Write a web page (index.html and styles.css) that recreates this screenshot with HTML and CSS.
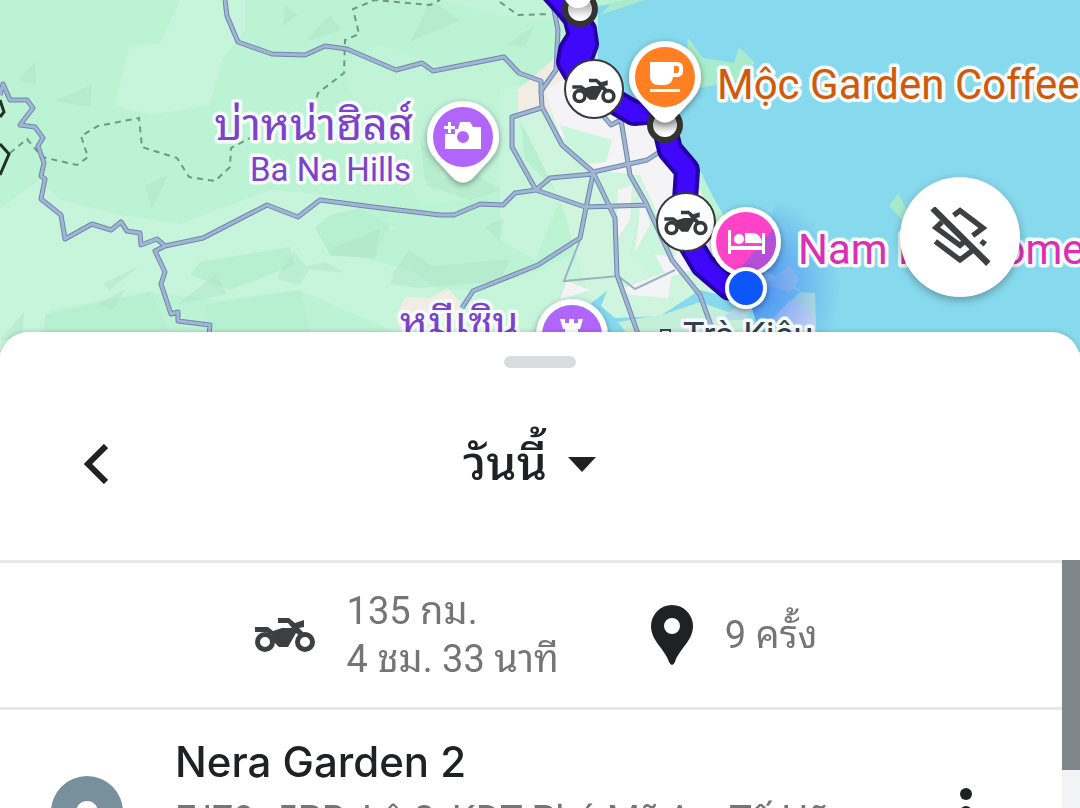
FILE: index.html
```html
<!DOCTYPE html>
<html lang="th">
<head>
    <meta charset="UTF-8">
    <meta name="viewport" content="width=device-width, initial-scale=1.0">
    <title>ไทม์ไลน์</title>
    <link rel="stylesheet" href="styles.css">
</head>
<body>
    <svg class="defs" width="0" height="0" aria-hidden="true">
        <symbol id="moto" viewBox="0 0 60 36">
            <circle cx="10" cy="25" r="7.5" fill="none" stroke="currentColor" stroke-width="5"/>
            <circle cx="50" cy="25" r="7.5" fill="none" stroke="currentColor" stroke-width="5"/>
            <path fill="currentColor" d="M0 10H13L18 14L27 11H37L33 6H23V1H34L40 6L49 3V10L44 11L51 18L46 20L41 16L33 30H24L19 25L17 18L11 15H0Z"/>
        </symbol>
        <symbol id="pin" viewBox="0 0 80 90">
            <path fill="#fff" d="M40 4A36 36 0 0 0 4 40C4 54 11 60 19 69L31 82Q40 89 49 82L61 69C69 60 76 54 76 40A36 36 0 0 0 40 4Z"/>
            <circle cx="40" cy="40" r="30" fill="currentColor"/>
        </symbol>
    </svg>

    <main class="map">
        <svg class="map-canvas" viewBox="0 0 1080 352" preserveAspectRatio="xMidYMin slice">
            <defs>
                <radialGradient id="beam" gradientUnits="userSpaceOnUse" cx="746" cy="288" r="95">
                    <stop offset="0" stop-color="#2b6cf6" stop-opacity=".75"/>
                    <stop offset="1" stop-color="#2b6cf6" stop-opacity="0"/>
                </radialGradient>
                <linearGradient id="stop-shade" x1="0" y1="0" x2="0" y2="1">
                    <stop offset="0.4" stop-color="#bbb"/>
                    <stop offset="0.8" stop-color="#fff"/>
                </linearGradient>
                <filter id="shadow" x="-30%" y="-30%" width="160%" height="160%">
                    <feDropShadow dx="0" dy="2" stdDeviation="3" flood-opacity=".4"/>
                </filter>
                <path id="roads" d="M0 95L3 84L10 100H27L33 108L20 125L35 127L43 138L38 146L44 163L41 176L45 179L41 199L61 215L65 239L92 224L111 230L121 222L127 231L140 233L141 245L157 239L165 246L155 251L165 272L161 284L171 314L178 312V321L210 325L208 345M165 246L203 238L267 205L298 217L320 200L373 207L440 215H454L480 204L503 205L515 193L536 190L550 178L593 174M536 190L585 207L648 205M225 0L227 16L238 42L272 54L305 55L325 46L347 49L396 70L422 63L433 71L504 57L519 73L541 81V93M552 0L558 30L556 70L541 91L542 107L562 145L593 172L615 218L617 275L642 345M541 108L512 117V147L536 190M593 174L586 208L580 238L538 265L473 291L462 308M593 172L647 160L675 142M600 112L611 125L621 120L630 175L646 203L672 260L700 295L718 345"/>
                <path id="route" d="M548 -14L566 6L577 20M576 20L580 36L571 50L569 62L576 74L592 92M584 30L586 44L580 60M594 90L612 100L634 113L655 111M664 125L670 150L687 170L685 200V235L703 265L730 288"/>
            </defs>

            <!-- land -->
            <rect width="1080" height="352" fill="#bcf3d4"/>
            <g fill="#c7f5dc">
                <path d="M180 0H245V30L222 60L210 105L150 115L115 105L130 45L160 44Z"/>
                <path d="M0 208L40 180L60 200L120 215L180 224L230 205L270 190L330 195L400 230L330 215L315 230L330 250L410 270L440 290L480 290L540 270L600 240V352H440L300 290L220 300L150 292L50 310L30 352H0Z"/>
                <path d="M345 60L380 45L440 65L500 62L520 80L515 160L495 190L470 200L420 205L395 150L360 120L350 90Z" opacity=".4"/>
                <path d="M500 90L540 80L560 200L535 260L500 240Z"/>
                <path d="M440 0H555V20L500 15Z" opacity=".6"/>
            </g>
            <g fill="#b7f0d0">
                <path d="M315 228L330 215L360 208L390 225L375 258L330 255ZM200 262L290 247L295 265L230 290L190 275ZM45 315L150 292L170 330L150 352H45Z"/>
                <path d="M520 115L555 120L580 170L555 190L525 160ZM205 305L300 290L315 352H215Z"/>
            </g>
            <g fill="#abe3c5" opacity=".4">
                <path d="M35 62L36 85L18 80ZM54 101L92 85L90 107ZM330 15L342 30L304 42ZM285 5L298 15L283 26Z"/>
                <path d="M145 185L168 175L152 209ZM103 284L140 265L110 290ZM278 275L294 251L309 270L300 284L278 280ZM178 304L215 275L227 294ZM0 340L24 312L22 340Z"/>
                <path d="M430 0L460 20L410 42L418 28ZM507 44L535 25L525 47ZM425 185L470 170L500 190L470 200ZM328 250L380 229L375 258L330 256ZM393 273L409 250L432 266L510 259L500 281L420 288L390 284Z"/>
                <path d="M485 226L504 218L500 242ZM300 268L325 262L345 273ZM97 304L125 290L112 310ZM420 140L450 190L425 180Z"/>
            </g>
            <!-- city -->
            <path d="M518 90L555 58L600 85L660 130L720 250L740 352H600L590 300L560 200L520 120Z" fill="#d0f5df"/>
            <path d="M518 90L555 58L590 95L620 130L580 128L540 108L518 118Z" fill="#f2ede4"/>
            <path d="M545 90L570 75L650 125L700 190L730 265L680 265L640 175L595 170L560 135Z" fill="#f4f4f6"/>
            <path d="M560 125L612 140L606 162L580 165L590 175L575 165ZM636 215L655 225L690 275L660 280L630 255Z" fill="#c9f6dc"/>
            <path d="M618 190L632 185L630 220L616 240ZM642 195L650 225L635 252ZM655 255L680 256L690 270L668 278ZM560 300L567 281L590 290ZM618 290L672 270L668 298L632 295Z" fill="#f4f4f6"/>
            <path d="M397 315L405 297L430 298L448 288L460 302L458 320L400 330Z" fill="#f2ede4"/>
            <!-- sea -->
            <path d="M598 6L640 0H1080V352H817L800 290L760 268L735 235L712 195L695 160L665 130L625 95L598 60Z" fill="#87d9ed"/>
            <path d="M598 6L625 0H618ZM688 38L703 58L734 63L739 47L755 63L738 80L700 88L685 70ZM615 0H645L600 15Z" fill="#a9ebcd"/>
            <path d="M889 206L898 194L906 208L904 222Z" fill="#a6ebc8"/>
            <path d="M590 304L607 291L601 306L615 318L660 316L700 290L740 300L780 282L820 300V352H600L595 322H560Z" fill="#87d9ed"/>
            <path d="M618 322L665 314L700 302L750 320L770 352H640ZM770 322L800 292L815 293L817 352H770Z" fill="#c4efd9"/>
            <path d="M745 300L790 265L799 280L790 292L770 286L745 320L720 320Z" fill="#b4dbe8"/>
            <path d="M770 322L790 300L812 310L820 352H760Z" fill="#d8dcf6" opacity=".8"/>

            <!-- trails -->
            <g class="trail">
                <path d="M10 153L27 139L42 157L77 165L88 157L81 136L98 126L139 118L142 147L177 158L189 177L215 181L230 167L231 148L250 138"/>
                <path d="M314 108L318 93L344 73L345 40L359 34L353 9L375 0L430 5L440 0"/>
                <path d="M500 2L518 15L550 14"/>
            </g>
            <path d="M0 100L4 112L0 117M0 144L9 154L0 175" fill="none" stroke="#223029" stroke-width="3"/>

            <!-- roads -->
            <path d="M580 240L564 281L618 276L635 289L675 270" fill="none" stroke="#9ab3c4" stroke-width="2"/>
            <use href="#roads" class="road-casing"/>
            <use href="#roads" class="road"/>

            <!-- travelled route -->
            <use href="#route" class="route-casing"/>
            <use href="#route" class="route"/>
            <path d="M746 288L775 205L805 195L850 240V352H765Z" fill="url(#beam)"/>

            <g class="stop">
                <circle cx="580" cy="9" r="15"/>
                <circle cx="665" cy="125" r="15"/>
            </g>
            <circle cx="578" cy="-6" r="14" fill="#fff"/>
            <circle cx="493" cy="-6" r="6" fill="#333"/>

            <g class="ride">
                <circle cx="594" cy="89" r="29"/>
                <use href="#moto" x="572" y="78" width="44" height="26"/>
                <circle cx="686" cy="222" r="29"/>
                <use href="#moto" x="664" y="210" width="44" height="26"/>
            </g>

            <!-- labels -->
            <g class="label">
                <text x="413" y="140" font-size="44" text-anchor="end" fill="#7c42c9">บ่าหน่าฮิลส์</text>
                <text x="411" y="181" font-size="33" text-anchor="end" fill="#7c42c9">Ba Na Hills</text>
                <text x="400" y="337" font-size="42" fill="#7c42c9">หมีเซิน</text>
                <text x="717" y="99" font-size="42" fill="#cf5a0c">Mộc Garden Coffee</text>
                <text x="798" y="264" font-size="42" fill="#d92fb0">Nam Hải Home</text>
                <text x="683" y="348" font-size="36" fill="#33404f">Trà Kiêu</text>
            </g>
            <rect x="661" y="330" width="9" height="9" fill="#fff" stroke="#444" stroke-width="2"/>

            <!-- places -->
            <g filter="url(#shadow)">
                <use href="#pin" x="423" y="97" width="80" height="90" color="#b265fb"/>
                <use href="#pin" x="625" y="37" width="80" height="90" color="#ff7f22"/>
                <use href="#pin" x="532" y="295" width="80" height="90" color="#b265fb"/>
                <circle cx="746" cy="242" r="35" fill="#fff"/>
            </g>
            <circle cx="746" cy="242" r="30" fill="#ff43c9"/>
            <path d="M773 229A30 30 0 0 1 746 272L738 271Z" fill="#b44fd6"/>
            <path fill="#fff" fill-rule="evenodd" d="M445 134H455V129H458L460 122H470L473 127H481V149H445ZM463 131A6 6 0 1 0 463 143A6 6 0 1 0 463 131ZM448 122H451V126H455V129H451V133H448V129H444V126H448Z"/>
            <path fill="#fff" fill-rule="evenodd" d="M650 62H677Q683 62 683 68V71Q683 77 676 77H673Q672 85 664 85H659Q650 85 650 76ZM674 66V73H677Q679 73 679 70V68Q679 66 677 66ZM650 89H680V92H650Z"/>
            <path fill="#fff" d="M728 230H731V246H762V233H765V254H762V250H731V254H728ZM745 233H753Q761 234 762 243H745Z"/>
            <circle cx="739" cy="239" r="5" fill="#fff"/>
            <path fill="#fff" d="M560 319H565V323H569V319H574V323H578V319H583L580 329H578V345H565V329H563Z"/>
            <circle cx="746" cy="288" r="19" fill="#0f56fb" stroke="#fff" stroke-width="4" filter="url(#shadow)"/>
        </svg>

        <button class="layers-button" aria-label="ปิดเลเยอร์">
            <svg viewBox="120 111 180 180" width="60" height="60" fill="none" stroke="#3c4043" stroke-width="16">
                <path d="M128 115L295 281" stroke-width="19"/>
                <path d="M191 136L210 122L279 174L248 197M156 156L138 173L210 226L226 212M136 214L210 270L246 243M273 213L286 223"/>
            </svg>
        </button>
    </main>

    <section class="sheet">
        <div class="handle"></div>
        <header class="sheet-header">
            <button class="back-button" aria-label="ย้อนกลับ">
                <svg viewBox="0 0 24 40" width="24" height="40" fill="none" stroke="#202124" stroke-width="6">
                    <path d="M22 2L4 20L22 38"/>
                </svg>
            </button>
            <button class="day-button">
                วันนี้
                <svg viewBox="0 0 30 15" width="30" height="15"><path d="M1 0H29L15 15Z" fill="#202124"/></svg>
            </button>
        </header>

        <div class="timeline">
            <div class="timeline-content">
                <div class="stats">
                    <div class="stat">
                        <svg class="stat-moto" width="60" height="36"><use href="#moto"/></svg>
                        <p>135 กม.<br>4 ชม. 33 นาที</p>
                    </div>
                    <div class="stat">
                        <svg viewBox="0 0 42 60" width="42" height="60">
                            <path fill="#202124" fill-rule="evenodd" d="M21 0A21 21 0 0 0 0 21C0 36 14 44 18 57Q21 63 24 57C28 44 42 36 42 21A21 21 0 0 0 21 0ZM21 13A8 8 0 1 1 21 29A8 8 0 1 1 21 13Z"/>
                        </svg>
                        <p>9 ครั้ง</p>
                    </div>
                </div>
                <article class="visit">
                    <span class="visit-icon"><span class="visit-dot"></span></span>
                    <div class="visit-text">
                        <h2>Nera Garden 2</h2>
                        <p>FJ79+5PR, Lô 8, KDT Phú Mỹ An, Tố Hữu</p>
                    </div>
                    <button class="more-button" aria-label="เพิ่มเติม">
                        <svg viewBox="0 0 12 48" width="12" height="48" fill="#202124">
                            <circle cx="6" cy="6" r="6"/>
                            <circle cx="6" cy="24" r="6"/>
                            <circle cx="6" cy="42" r="6"/>
                        </svg>
                    </button>
                </article>
            </div>
            <div class="scrollbar"><div class="scroll-thumb"></div></div>
        </div>
    </section>
</body>
</html>
```
FILE: styles.css
```css
* { margin: 0; padding: 0; box-sizing: border-box; }
body {
    font-family: Roboto, "Noto Sans Thai Looped", "Noto Looped Thai", Loma, Waree, Garuda, "Noto Sans Thai", "Noto Sans", sans-serif;
    background: #fff;
    color: #202124;
    display: flex;
    flex-direction: column;
    height: 100vh;
    overflow: hidden;
}
button {
    border: none;
    background: none;
    font-family: inherit;
    color: inherit;
    cursor: pointer;
}
svg { display: block; }
.defs { position: absolute; }

/* map */
.map {
    position: relative;
    flex: none;
    height: 352px;
    overflow: hidden;
    background: #87d9ed;
}
.map-canvas {
    width: 100%;
    height: 100%;
}
.trail {
    fill: none;
    stroke: #6c9a83;
    stroke-width: 2;
    stroke-dasharray: 6 5;
}
.road-casing, .road {
    fill: none;
    stroke-linejoin: round;
}
.road-casing {
    stroke: #7186b0;
    stroke-width: 5;
}
.road {
    stroke: #a0b6d2;
    stroke-width: 3;
}
.route-casing, .route {
    fill: none;
    stroke-linecap: round;
    stroke-linejoin: round;
}
.route-casing {
    stroke: #2400a6;
    stroke-width: 26;
}
.route {
    stroke: #3f08fb;
    stroke-width: 18;
}
.stop {
    fill: url(#stop-shade);
    stroke: #333;
    stroke-width: 6;
}
.ride circle {
    fill: #fff;
    stroke: #37393c;
    stroke-width: 2;
}
.ride { color: #37393c; }
.label text {
    stroke: #f4fbfa;
    stroke-width: 7;
    stroke-linejoin: round;
    paint-order: stroke;
}
.layers-button {
    position: absolute;
    top: 177px;
    right: 60px;
    width: 120px;
    height: 120px;
    border-radius: 50%;
    background: #fff;
    box-shadow: 0 3px 8px rgba(0, 0, 0, 0.3);
    display: flex;
    align-items: center;
    justify-content: center;
}

/* bottom sheet */
.sheet {
    position: relative;
    flex: 1;
    min-height: 0;
    margin-top: -20px;
    padding-top: 24px;
    background: #fff;
    border-radius: 28px 28px 0 0;
    display: flex;
    flex-direction: column;
    box-shadow: 0 -1px 4px rgba(0, 0, 0, 0.15);
}
.handle {
    flex: none;
    align-self: center;
    width: 72px;
    height: 12px;
    border-radius: 6px;
    background: #dadce0;
}
.sheet-header {
    flex: none;
    height: 192px;
    display: grid;
    grid-template-columns: 120px 1fr 140px;
    align-items: center;
}
.back-button {
    justify-self: end;
    padding: 12px;
}
.day-button {
    justify-self: center;
    display: flex;
    align-items: center;
    gap: 20px;
    font-size: 48px;
    line-height: 60px;
    font-weight: 500;
}
.timeline {
    flex: 1;
    min-height: 0;
    display: flex;
    overflow: hidden;
}
.timeline-content {
    flex: 1;
    border-top: 3px solid #e8e8e8;
}
.stats {
    height: 147px;
    padding-left: 10px;
    border-bottom: 3px solid #e8e8e8;
    display: flex;
    justify-content: center;
    gap: 92px;
    color: #757575;
    font-size: 38px;
    line-height: 48px;
}
.stat {
    display: flex;
    align-items: center;
    gap: 32px;
}
.stat-moto { color: #3c4043; }
.visit {
    display: flex;
    align-items: flex-start;
    padding: 24px 90px 0 51px;
    gap: 52px;
}
.visit-icon {
    flex: none;
    width: 72px;
    height: 72px;
    margin-top: 42px;
    border-radius: 50%;
    background: #78909c;
    display: flex;
    justify-content: center;
    padding-top: 25px;
}
.visit-dot {
    width: 22px;
    height: 22px;
    border-radius: 50%;
    background: #fff;
}
.visit-text {
    flex: 1;
    min-width: 0;
    white-space: nowrap;
}
.visit-text h2 {
    font-family: Inter, Roboto, sans-serif;
    font-size: 42px;
    line-height: 56px;
    font-weight: 500;
}
.visit-text p {
    font-size: 38px;
    line-height: 60px;
    color: #757575;
}
.more-button { margin-top: 54px; }
.scrollbar {
    flex: none;
    width: 18px;
    background: #f1f3f4;
}
.scroll-thumb {
    height: 210px;
    background: #80868b;
}
```
